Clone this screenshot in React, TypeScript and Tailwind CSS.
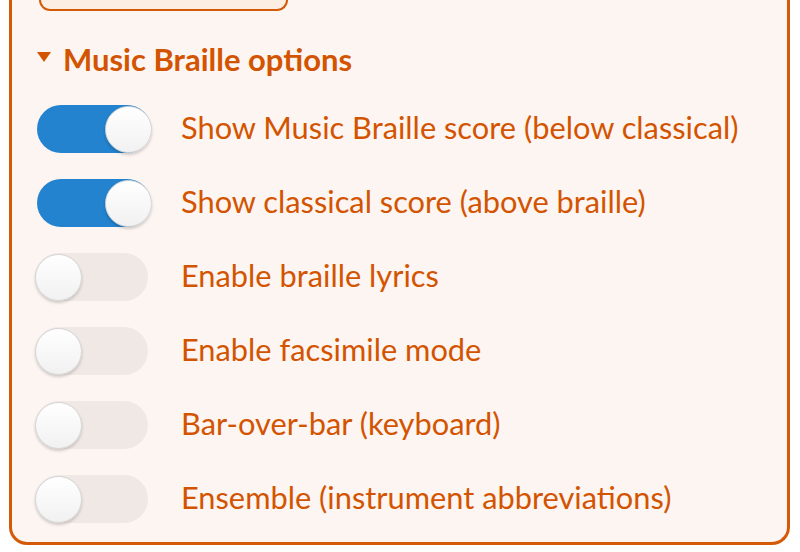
import { useState } from 'react';

const OPTIONS = [
  { label: 'Show Music Braille score (below classical)', on: true },
  { label: 'Show classical score (above braille)', on: true },
  { label: 'Enable braille lyrics', on: false },
  { label: 'Enable facsimile mode', on: false },
  { label: 'Bar-over-bar (keyboard)', on: false },
  { label: 'Ensemble (instrument abbreviations)', on: false },
];

function Toggle({ on, onClick }: { on: boolean; onClick: () => void }) {
  return (
    <div className="relative w-[117px] h-[48px] shrink-0">
      <button
        onClick={onClick}
        className={`absolute top-0 h-[48px] rounded-full ${on ? 'left-[2px] w-[114px] bg-[#2383cf]' : 'left-0 w-[113px] bg-[#f0e8e5]'}`}
      >
        <span
          className={`absolute top-[0.5px] w-[47px] h-[47px] rounded-full bg-gradient-to-b from-white to-[#f1f1f1] border border-[#d6d6d6] shadow-[0_2px_3px_rgba(0,0,0,0.18)] ${on ? 'left-[68px]' : 'left-0'}`}
        />
      </button>
    </div>
  );
}

export default function App() {
  const [opts, setOpts] = useState(OPTIONS);

  return (
    <div className="w-[800px] h-[552px] bg-white overflow-hidden" style={{ fontFamily: 'Lato, "Open Sans", sans-serif' }}>
      <div className="ml-[9px] mr-[10px] h-[545px] bg-[#fdf5f2] border-x-[3px] border-b-[3px] border-[#d55a07] rounded-b-[18px]">
        <div className="ml-[27px] w-[249px] h-[11px] bg-[#fdeee4] border-x-2 border-b-2 border-[#d55a07] rounded-b-[12px]" />
        <div className="flex items-center gap-[12px] pl-[25px] pt-[16px] h-[81px] text-[#d35400]">
          <svg width="14" height="10" viewBox="0 0 14 10" className="-mt-[6px]">
            <path d="M0 0 H14 L7 10 Z" fill="#d35400" />
          </svg>
          <span className="text-[31px] font-bold leading-none">Music Braille options</span>
        </div>
        <div className="flex flex-col">
          {opts.map((o, i) => (
            <div key={o.label} className="flex items-center h-[74px] pl-[23px] gap-[29px]">
              <Toggle on={o.on} onClick={() => setOpts(opts.map((p, j) => (j === i ? { ...p, on: !p.on } : p)))} />
              <span className="text-[#d35400] text-[30.8px] leading-none -mt-[2px]">{o.label}</span>
            </div>
          ))}
        </div>
      </div>
    </div>
  );
}
